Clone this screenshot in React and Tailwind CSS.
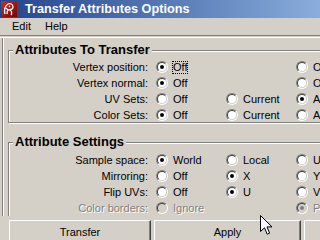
import React from "react";

const Radio = ({ checked, disabled }) => (
  <span className="w-[12px] h-[12px] shrink-0 rounded-full border border-t-[#808080] border-l-[#808080] border-r-white border-b-white flex items-center justify-center">
    <span
      className={`w-[10px] h-[10px] rounded-full border border-t-[#404040] border-l-[#404040] border-r-[#d4d0c8] border-b-[#d4d0c8] flex items-center justify-center ${
        disabled ? "bg-[#d4d0c8]" : "bg-white"
      }`}
    >
      {checked && (
        <span className={`w-[4px] h-[4px] rounded-full ${disabled ? "bg-[#808080]" : "bg-black"}`} />
      )}
    </span>
  </span>
);

const Option = ({ opt, disabled }) => (
  <div className="w-[70px] shrink-0 flex items-center gap-[5px]">
    {opt && (
      <>
        <Radio checked={opt.on} disabled={disabled} />
        {opt.focus ? (
          <span className="-ml-[1px] border border-dotted border-black leading-[11px] h-[13px]">
            {opt.label}
          </span>
        ) : (
          <span
            className={
              disabled ? "text-[#808080] [text-shadow:1px_1px_0_#fff]" : "text-black"
            }
          >
            {opt.label}
          </span>
        )}
      </>
    )}
  </div>
);

const Row = ({ label, opts, disabled }) => (
  <div className="flex items-center h-[16px]">
    <div
      className={`w-[139px] shrink-0 text-right ${
        disabled ? "text-[#808080] [text-shadow:1px_1px_0_#fff]" : "text-black"
      }`}
    >
      {label}
    </div>
    <div className="ml-[8px] flex">
      {opts.map((o, i) => (
        <Option key={i} opt={o} disabled={disabled} />
      ))}
    </div>
  </div>
);

const Frame = ({ title, children, className }) => (
  <fieldset
    className={`w-[400px] border border-[#808080] shadow-[inset_1px_1px_0_#fff,1px_1px_0_#fff] ${className}`}
  >
    <legend className="ml-[4px] px-[2px] bg-[#d4d0c8] text-[13px] font-bold leading-[16px] text-black">
      {title}
    </legend>
    {children}
  </fieldset>
);

const transferRows = [
  { label: "Vertex position:", opts: [{ label: "Off", on: true, focus: true }, null, { label: "On" }] },
  { label: "Vertex normal:", opts: [{ label: "Off", on: true }, null, { label: "On" }] },
  { label: "UV Sets:", opts: [{ label: "Off" }, { label: "Current" }, { label: "All", on: true }] },
  { label: "Color Sets:", opts: [{ label: "Off", on: true }, { label: "Current" }, { label: "All" }] },
];

const settingRows = [
  { label: "Sample space:", opts: [{ label: "World", on: true }, { label: "Local" }, { label: "UV" }] },
  { label: "Mirroring:", opts: [{ label: "Off" }, { label: "X", on: true }, { label: "Y" }] },
  { label: "Flip UVs:", opts: [{ label: "Off" }, { label: "U", on: true }, { label: "V" }] },
  { label: "Color borders:", disabled: true, opts: [{ label: "Ignore" }, null, { label: "Preserve", on: true }] },
];

const MayaIcon = () => (
  <svg width="16" height="16" viewBox="0 0 16 16" className="shrink-0">
    <defs>
      <linearGradient id="mg" x1="0" y1="0" x2="1" y2="1">
        <stop offset="0" stopColor="#d42a1e" />
        <stop offset="1" stopColor="#6a0a06" />
      </linearGradient>
    </defs>
    <rect x="0" y="0" width="16" height="16" fill="url(#mg)" />
    <path
      d="M4 13 C3 9 4 5 7 3 C9 2 12 3 12 6 C12 8 10 9 9 8 M6 13 C6 10 7 8 9 9 C11 10 11 13 10 14 M8 5 L9 6 M5 7 L7 9"
      fill="none"
      stroke="#fff"
      strokeWidth="1.3"
    />
  </svg>
);

const Button = ({ children, className }) => (
  <div
    className={`h-[24px] shrink-0 flex items-center justify-center border border-t-white border-l-white border-r-[#404040] border-b-[#404040] shadow-[inset_-1px_-1px_0_#808080] ${className}`}
  >
    {children}
  </div>
);

export default function App() {
  return (
    <div className="relative w-[320px] h-[240px] overflow-hidden bg-[#d4d0c8] font-['Liberation_Sans',Arial,sans-serif] text-[11px] text-black">
      {/* Title bar */}
      <div className="h-[18px] flex items-center pl-[1px] bg-gradient-to-r from-[#24448a] to-[#8aaddc]">
        <MayaIcon />
        <span className="ml-[8px] text-white font-bold text-[12.7px] leading-none">
          Transfer Attributes Options
        </span>
      </div>

      {/* Menu bar */}
      <div className="h-[17px] flex items-center pl-[5px]">
        <span className="px-[7px]">Edit</span>
        <span className="px-[7px]">Help</span>
      </div>
      <div className="h-px bg-[#808080]" />
      <div className="h-px" />
      <div className="h-px bg-white" />

      {/* Scroll panel */}
      <div className="ml-[2px] h-[178px] overflow-hidden border-l border-[#808080] shadow-[inset_1px_0_0_#fff] pl-[5px] pt-[4px]">
        <Frame title="Attributes To Transfer" className="h-[81px]">
          <div className="mt-[1px]">
            {transferRows.map((r) => (
              <Row key={r.label} {...r} />
            ))}
          </div>
        </Frame>
        <Frame title="Attribute Settings" className="mt-[11px]">
          <div className="mt-[2px]">
            {settingRows.map((r) => (
              <Row key={r.label} {...r} />
            ))}
          </div>
        </Frame>
      </div>

      {/* Buttons */}
      <div className="mt-[4px] flex gap-[3px] pl-[9px]">
        <Button className="w-[142px]">Transfer</Button>
        <Button className="w-[147px]">Apply</Button>
        <Button className="w-[147px]">Close</Button>
      </div>

      {/* Mouse cursor */}
      <svg className="absolute left-[260px] top-[215px]" width="13" height="21" viewBox="0 0 13 21">
        <path
          d="M0.5 0.5 L0.5 16.5 L4.5 12.8 L7.2 19.2 L9.6 18.2 L7 11.9 L12 11.9 Z"
          fill="#fff"
          stroke="#000"
          strokeWidth="1"
          strokeLinejoin="miter"
        />
      </svg>
    </div>
  );
}
